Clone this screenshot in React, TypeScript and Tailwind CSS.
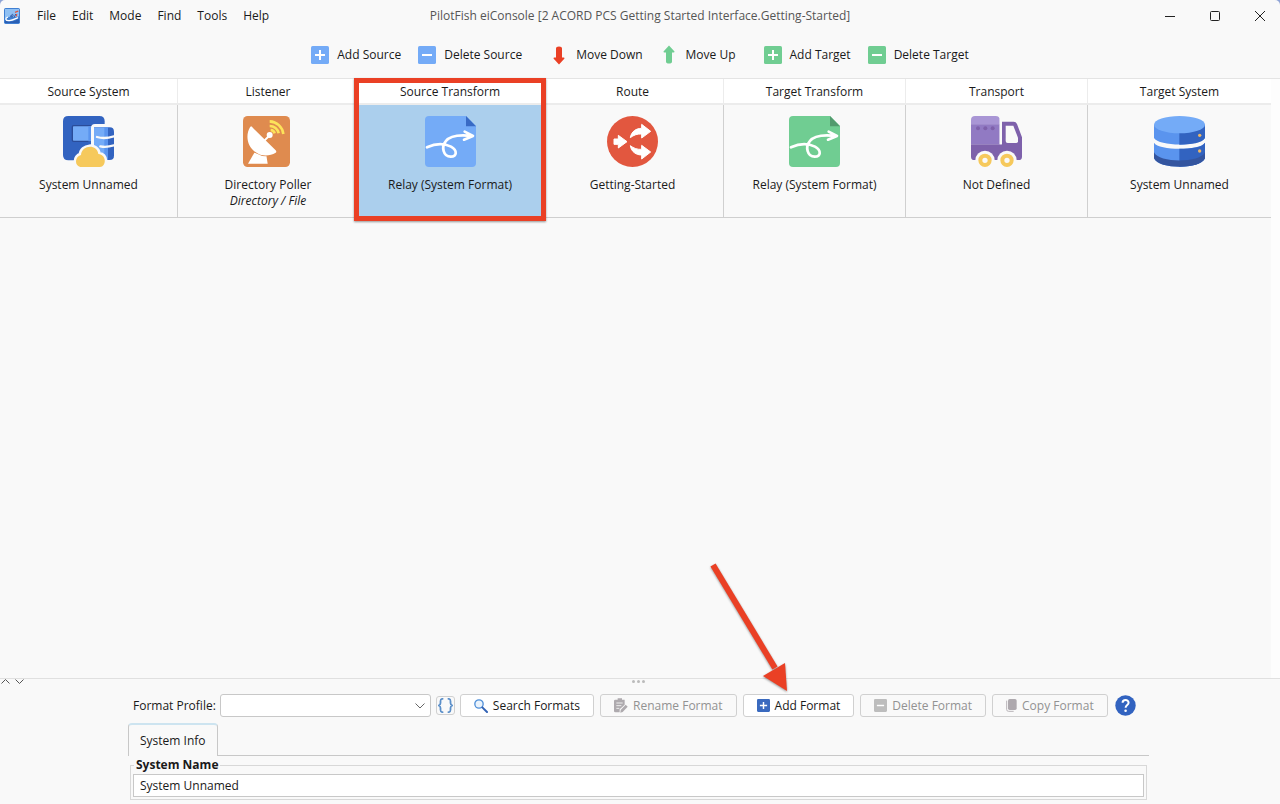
import type { ReactNode } from "react";

type Stage = {
  title: string;
  name: string;
  detail?: string;
  icon: ReactNode;
  selected?: boolean;
};

function AppLogo() {
  return (
    <svg width="16" height="16" viewBox="0 0 48 48" className="shrink-0">
      <rect width="48" height="48" rx="5" fill="#3f7fd2" />
      <path d="M3 3H45V25C34 31 22 21 3 32Z" fill="#8fc0f3" />
      <path d="M3 37C18 44 32 41 45 31V45H3Z" fill="#2a5fb4" />
      <path d="M12 27C2 31 4 39 16 38C28 37 34 32 42 29" fill="none" stroke="#fff" strokeWidth="4" />
      <path d="M20 27C22 17 29 17 27 24C25 29 20 26 22 22M31 28L35 18" fill="none" stroke="#3159a5" strokeWidth="3" />
      <path d="M33 13L43 9M38 18L37 25" fill="none" stroke="#e0533b" strokeWidth="4" />
    </svg>
  );
}

function SquareIcon({ color, minus, size = 18 }: { color: string; minus?: boolean; size?: number }) {
  return (
    <svg width={size} height={size} viewBox="0 0 18 18" className="shrink-0">
      <rect width="18" height="18" rx="1.6" fill={color} />
      <path d={minus ? "M4 9H14" : "M4 9H14M9 4V14"} stroke="#fff" strokeWidth="2" />
    </svg>
  );
}

function ArrowIcon({ color, up }: { color: string; up?: boolean }) {
  return (
    <svg width="18" height="20" viewBox="0 0 18 20" className="shrink-0">
      <path
        d={
          up
            ? "M9 0.5L14.5 6.6Q14.6 7.6 13.6 7.6H12V16.4Q12 18.4 9 18.4Q6 18.4 6 16.4V7.6H4.4Q3.4 7.6 3.5 6.6Z"
            : "M9 19.5L14.5 13.4Q14.6 12.4 13.6 12.4H12V3.6Q12 1.6 9 1.6Q6 1.6 6 3.6V12.4H4.4Q3.4 12.4 3.5 13.4Z"
        }
        fill={color}
      />
    </svg>
  );
}

function SourceSystemIcon() {
  return (
    <svg width="51" height="51" viewBox="0 0 153 153">
      <path d="M16 0H109Q125 0 125 16V133H16Q0 133 0 117V16Q0 0 16 0Z" fill="#3263c0" />
      <rect x="28" y="29" width="62" height="47" rx="4" fill="#74abf7" stroke="#2a4c99" strokeWidth="4" />
      <path d="M76 31H92V76H76Z" fill="#5a94ee" />
      <path d="M84 150V36Q84 24 96 24H160V150Z" fill="#f9f9f9" />
      <path d="M93 34H140Q153 34 153 47V119Q153 132 140 132H93Z" fill="#3263c0" />
      <path d="M93 34H135V132H93Z" fill="#74abf7" />
      <path d="M124 34H135V132H124Z" fill="#5a94ee" />
      <path d="M102 63Q125 70 153 61M112 91Q130 95 153 88" fill="none" stroke="#f9f9f9" strokeWidth="7" strokeLinecap="round" />
      <path
        d="M56 152C34 152 34 122 54 117C56 87 102 83 106 114C132 116 130 152 111 152Z"
        fill="#f6c95c"
        stroke="#f9f9f9"
        strokeWidth="15"
      />
      <path d="M56 153C34 153 34 122 54 117C56 87 102 83 106 114C132 116 130 153 111 153Z" fill="#f6c95c" />
    </svg>
  );
}

function ListenerIcon() {
  return (
    <svg width="51" height="51" viewBox="0 0 153 153">
      <rect width="141" height="153" rx="14" fill="#df8b4f" />
      <path d="M34 110L15 143H74L70 118Z" fill="#fff" />
      <path
        d="M24 31Q27 31 30 36L98 103Q102 108 98 110C82 119 61 123 42 111C13 96 6 59 21 34Z"
        fill="#fff"
        stroke="#df8b4f"
        strokeWidth="4"
        paintOrder="stroke"
      />
      <path d="M64 74L81 57" stroke="#fff" strokeWidth="6" />
      <circle cx="80" cy="57" r="9" fill="#fff" />
      <path d="M80 16A43 43 0 0 1 121 54M80 30A27 27 0 0 1 107 52M83 42A13 13 0 0 1 95 52" fill="none" stroke="#fde35a" strokeWidth="8" />
    </svg>
  );
}

function TransformIcon({ page, fold }: { page: string; fold: string }) {
  return (
    <svg width="51" height="51" viewBox="0 0 153 153">
      <path d="M12 0H123L153 30V141Q153 153 141 153H12Q0 153 0 141V12Q0 0 12 0Z" fill={page} />
      <path d="M123 0V31H153Z" fill={fold} />
      <path
        d="M6 94C30 83 58 82 78 92C98 104 96 121 77 122C55 122 48 93 62 76C76 57 110 56 142 60M119 47L144 60L117 71"
        fill="none"
        stroke="#fff"
        strokeWidth="8"
        strokeLinecap="round"
        strokeLinejoin="round"
      />
    </svg>
  );
}

function RouteIcon() {
  return (
    <svg width="51" height="51" viewBox="0 0 153 153">
      <circle cx="76.5" cy="76.5" r="76.5" fill="#e2573f" />
      <g fill="#fff" stroke="#fff" strokeWidth="3" strokeLinejoin="round">
        <path d="M21 69H34V58L60 77L34 96V85H21Z" />
        <path d="M70 65C73 46 88 37 104 37V25L131 46L104 66V54C92 53 80 57 70 65Z" />
        <path d="M70 89C73 108 88 117 104 117V129L131 108L104 88V100C92 101 80 97 70 89Z" />
      </g>
    </svg>
  );
}

function TransportIcon() {
  return (
    <svg width="51" height="51" viewBox="0 0 153 153">
      <path d="M0 85H92V17H128Q135 17 138 24L153 64V122Q153 132 143 132H10Q0 132 0 122Z" fill="#7e61ab" />
      <path d="M12 0H74Q86 0 86 12V26H0V12Q0 0 12 0Z" fill="#a996d5" />
      <path d="M0 25H86V85H0Z" fill="#917ac3" />
      <path d="M86 8H93V85H86Z" fill="#f9f9f9" />
      <path d="M104 29H127L141 65V76Q141 81 136 81H110Q104 81 104 75Z" fill="#f9f9f9" />
      <g fill="#7e61ab">
        <circle cx="21" cy="37" r="6" />
        <circle cx="43" cy="37" r="6" />
        <circle cx="65" cy="37" r="6" />
      </g>
      <circle cx="42" cy="133" r="29" fill="#f9f9f9" />
      <circle cx="108" cy="133" r="29" fill="#f9f9f9" />
      <circle cx="42" cy="133" r="14" fill="none" stroke="#f6c95c" strokeWidth="12" />
      <circle cx="108" cy="133" r="14" fill="none" stroke="#f6c95c" strokeWidth="12" />
    </svg>
  );
}

function TargetSystemIcon() {
  return (
    <svg width="51" height="51" viewBox="0 0 153 153">
      <path d="M0 26V66C14 92 139 92 153 66V26Z" fill="#5a94ee" />
      <path d="M76 26V86C112 86 144 81 153 66V26Z" fill="#3263c0" />
      <path d="M0 80C14 104 139 104 153 80V127C139 161 14 161 0 127Z" fill="#5a94ee" />
      <path d="M76 98C112 98 144 94 153 80V127C144 145 112 152 76 152Z" fill="#3263c0" />
      <path d="M0 109C14 142 139 142 153 109V127C139 161 14 161 0 127Z" fill="#34559f" />
      <ellipse cx="76.5" cy="26" rx="76.5" ry="26" fill="#74abf7" />
      <circle cx="137" cy="58" r="5" fill="#eeb765" />
      <circle cx="137" cy="105" r="5" fill="#eeb765" />
    </svg>
  );
}

function SearchIcon() {
  return (
    <svg width="14" height="14" viewBox="0 0 42 42" className="shrink-0">
      <circle cx="15" cy="15" r="12.5" fill="#eaf3fc" stroke="#4f8fd8" strokeWidth="4" />
      <path d="M25 25L39 39" stroke="#3263b5" strokeWidth="6" strokeLinecap="round" />
    </svg>
  );
}

function RenameIcon() {
  return (
    <svg width="14" height="15" viewBox="0 0 42 45" className="shrink-0">
      <path d="M4 5H11V1H24V5H32V20L17 34V43H4Q0 43 0 39V9Q0 5 4 5Z" fill="#aeaaae" />
      <path d="M7 15H26M7 23H22M7 31H16" stroke="#eee" strokeWidth="3" />
      <path d="M20 36L35 20L41 26L26 42L19 44Z" fill="#aeaaae" />
    </svg>
  );
}

function CopyIcon() {
  return (
    <svg width="11" height="13" viewBox="0 0 33 39" className="shrink-0">
      <path d="M2 5V32Q2 37 8 37H23" fill="none" stroke="#b8b4b8" strokeWidth="3" />
      <rect x="6" y="0" width="26" height="33" rx="5" fill="#aea9ae" />
    </svg>
  );
}

function BracesIcon() {
  return (
    <svg width="15" height="15" viewBox="0 0 42 42" className="shrink-0">
      <path
        d="M15 2C8 2 7 4 7 9V14C7 18 5 20 2 21C5 22 7 24 7 28V33C7 38 8 40 15 40M27 2C34 2 35 4 35 9V14C35 18 37 20 40 21C37 22 35 24 35 28V33C35 38 34 40 27 40"
        fill="none"
        stroke="#5b8fc9"
        strokeWidth="5"
      />
    </svg>
  );
}

const MENUS = ["File", "Edit", "Mode", "Find", "Tools", "Help"];

const TOOLBAR: { label: string; icon: ReactNode }[][] = [
  [
    { label: "Add Source", icon: <SquareIcon color="#74abf7" /> },
    { label: "Delete Source", icon: <SquareIcon color="#74abf7" minus /> },
  ],
  [
    { label: "Move Down", icon: <ArrowIcon color="#ea4025" /> },
    { label: "Move Up", icon: <ArrowIcon color="#70cd92" up /> },
  ],
  [
    { label: "Add Target", icon: <SquareIcon color="#70cd92" /> },
    { label: "Delete Target", icon: <SquareIcon color="#70cd92" minus /> },
  ],
];

const STAGES: Stage[] = [
  { title: "Source System", name: "System Unnamed", icon: <SourceSystemIcon /> },
  { title: "Listener", name: "Directory Poller", detail: "Directory / File", icon: <ListenerIcon /> },
  {
    title: "Source Transform",
    name: "Relay (System Format)",
    icon: <TransformIcon page="#74abf7" fold="#386ac5" />,
    selected: true,
  },
  { title: "Route", name: "Getting-Started", icon: <RouteIcon /> },
  { title: "Target Transform", name: "Relay (System Format)", icon: <TransformIcon page="#70cd92" fold="#529b6e" /> },
  { title: "Transport", name: "Not Defined", icon: <TransportIcon /> },
  { title: "Target System", name: "System Unnamed", icon: <TargetSystemIcon /> },
];

function TitleBar() {
  return (
    <header className="grid grid-cols-[1fr_auto_1fr] items-center h-8">
      <div className="flex items-center pl-1">
        <AppLogo />
        <nav className="flex gap-4 pl-[17px]">
          {MENUS.map((m) => (
            <button key={m} type="button">{m}</button>
          ))}
        </nav>
      </div>
      <h1 className="text-[#555]">PilotFish eiConsole [2 ACORD PCS Getting Started Interface.Getting-Started]</h1>
      <div className="flex justify-end gap-[33px] pr-[14px]">
        <button type="button" aria-label="Minimize">
          <svg width="12" height="12" viewBox="0 0 12 12"><path d="M1 6.5H11" stroke="#222" /></svg>
        </button>
        <button type="button" aria-label="Maximize">
          <svg width="12" height="12" viewBox="0 0 12 12">
            <rect x="1.5" y="1.5" width="9" height="9" rx="1" fill="none" stroke="#222" />
          </svg>
        </button>
        <button type="button" aria-label="Close">
          <svg width="12" height="12" viewBox="0 0 12 12"><path d="M1 1L11 11M11 1L1 11" stroke="#222" /></svg>
        </button>
      </div>
    </header>
  );
}

function Toolbar() {
  return (
    <div className="flex justify-center gap-7 h-[46px]">
      {TOOLBAR.map((group, i) => (
        <div key={i} className="flex items-center gap-[17px]">
          {group.map((b) => (
            <button key={b.label} type="button" className="flex items-center gap-2">
              {b.icon}
              {b.label}
            </button>
          ))}
        </div>
      ))}
    </div>
  );
}

function StageColumn({ stage }: { stage: Stage }) {
  return (
    <button
      type="button"
      className="group relative flex flex-col items-stretch text-center"
    >
      <span className="h-[26px] leading-[25px] bg-white border-b-2 border-r border-[#ececec] group-last:border-r-0">
        {stage.title}
      </span>
      <span
        className={`flex flex-1 flex-col items-center pt-[11px] border-r border-[#d0d0d0] group-last:border-r-0 ${
          stage.selected ? "bg-[#abcfed]" : ""
        }`}
      >
        {stage.icon}
        <span className="mt-[10px]">{stage.name}</span>
        {stage.detail && <span className="italic">{stage.detail}</span>}
      </span>
      {stage.selected && (
        <span className="absolute -left-[5px] -right-1 -top-px -bottom-1 z-10 border-[5px] border-[#ea4025] shadow-[0_1px_2px_rgba(0,0,0,0.4)]" />
      )}
    </button>
  );
}

function ToolButton({ icon, label, disabled }: { icon: ReactNode; label: string; disabled?: boolean }) {
  return (
    <button
      type="button"
      disabled={disabled}
      className={`flex items-center gap-[5px] h-[23px] px-[13px] rounded-[3px] border border-[#d0d0d0] whitespace-nowrap ${
        disabled ? "text-[#929292]" : "bg-white"
      }`}
    >
      {icon}
      {label}
    </button>
  );
}

function CalloutArrow() {
  return (
    <svg
      width="84"
      height="132"
      viewBox="0 0 84 132"
      className="absolute bottom-full left-0 -ml-9 mb-px pointer-events-none drop-shadow-[0_1px_1px_rgba(0,0,0,0.4)]"
    >
      <path d="M6 4L68 107" stroke="#ea4025" strokeWidth="6" />
      <path d="M80 130L56 115L78 102Z" fill="#ea4025" />
    </svg>
  );
}

function FormatBar() {
  return (
    <div className="flex items-center pl-[5px]">
      <label htmlFor="format-profile" className="mr-1 whitespace-nowrap">Format Profile:</label>
      <div className="relative w-[211px] shrink-0">
        <select
          id="format-profile"
          className="block w-full h-[23px] appearance-none bg-white border border-[#c8c8c8] rounded-[3px] px-2"
        />
        <svg width="10" height="6" viewBox="0 0 10 6" className="absolute right-[6px] top-[9px] pointer-events-none">
          <path d="M0.5 0.5L5 5L9.5 0.5" fill="none" stroke="#666" />
        </svg>
      </div>
      <button
        type="button"
        aria-label="Variables"
        className="flex shrink-0 items-center justify-center w-[19px] h-[19px] mx-[5px] rounded-[3px] border border-[#d0d0d0]"
      >
        <BracesIcon />
      </button>
      <div className="flex gap-[6px]">
        <ToolButton icon={<SearchIcon />} label="Search Formats" />
        <ToolButton icon={<RenameIcon />} label="Rename Format" disabled />
        <div className="relative">
          <ToolButton icon={<SquareIcon color="#3a6abf" size={13} />} label="Add Format" />
          <CalloutArrow />
        </div>
        <ToolButton icon={<SquareIcon color="#bdbdbd" minus size={13} />} label="Delete Format" disabled />
        <ToolButton icon={<CopyIcon />} label="Copy Format" disabled />
      </div>
      <button type="button" aria-label="Help" className="ml-[7px] shrink-0">
        <svg width="21" height="21" viewBox="0 0 21 21">
          <circle cx="10.5" cy="10.5" r="10.2" fill="#3263c0" />
          <path d="M7.6 7.8C7.6 4.2 13.6 4.2 13.6 7.8C13.6 10 10.6 10 10.6 12.7" fill="none" stroke="#fff" strokeWidth="2" />
          <circle cx="10.6" cy="15.8" r="1.3" fill="#fff" />
        </svg>
      </button>
    </div>
  );
}

function SystemInfo() {
  return (
    <section className="mt-[6px]">
      <div role="tablist" className="flex items-end">
        <button
          type="button"
          role="tab"
          aria-selected="true"
          className="h-[33px] px-[11px] rounded-t-[4px] border-x border-t-2 border-x-[#c8c8c8] border-t-[#cde4f0]"
        >
          System Info
        </button>
        <div className="flex-1 border-b border-[#c8c8c8]" />
      </div>
      <fieldset className="mx-[2px] mt-px border border-[#d8d8d8] px-[2px] pt-px pb-[2px]">
        <legend className="ml-px px-[2px] font-bold leading-4">
          <label htmlFor="system-name">System Name</label>
        </legend>
        <input
          id="system-name"
          type="text"
          defaultValue="System Unnamed"
          className="block w-full h-[23px] px-[6px] bg-white border border-[#c8c8c8]"
        />
      </fieldset>
    </section>
  );
}

export default function App() {
  return (
    <div className="min-h-screen flex bg-[#8ea3d6]">
      <div className="flex flex-1 flex-col rounded-t-[5px] bg-[#f9f9f9] text-[#1a1a1a] text-[12px] leading-4 font-['Open_Sans','Noto_Sans',sans-serif]">
        <TitleBar />
        <Toolbar />
        <main className="flex flex-1 flex-col border-t border-[#e4e4e4] bg-[#fdfdfd] pr-[9px]">
          <div className="grid grid-cols-[178fr_181fr_183fr_182fr_182fr_182fr_183fr] min-h-[139px] border-b border-[#cfcfcf] bg-[#f9f9f9]">
            {STAGES.map((s) => (
              <StageColumn key={s.title} stage={s} />
            ))}
          </div>
          <div className="flex-1 bg-[#f9f9f9]" />
        </main>
        <div className="grid grid-cols-[1fr_auto_1fr] h-4 border-t border-[#e0e0e0] pr-[3px]">
          <div className="flex gap-[5px] pl-px">
            <svg width="9" height="5" viewBox="0 0 9 5"><path d="M0.5 4.5L4.5 0.5L8.5 4.5" fill="none" stroke="#555" /></svg>
            <svg width="9" height="5" viewBox="0 0 9 5"><path d="M0.5 0.5L4.5 4.5L8.5 0.5" fill="none" stroke="#555" /></svg>
          </div>
          <div className="flex gap-[2px] pt-px">
            <span className="size-[3px] rounded-full bg-[#bbb]" />
            <span className="size-[3px] rounded-full bg-[#bbb]" />
            <span className="size-[3px] rounded-full bg-[#bbb]" />
          </div>
        </div>
        <div className="pr-[3px] pb-1">
          <div className="max-w-[1021px] mx-auto">
            <FormatBar />
            <SystemInfo />
          </div>
        </div>
      </div>
    </div>
  );
}
